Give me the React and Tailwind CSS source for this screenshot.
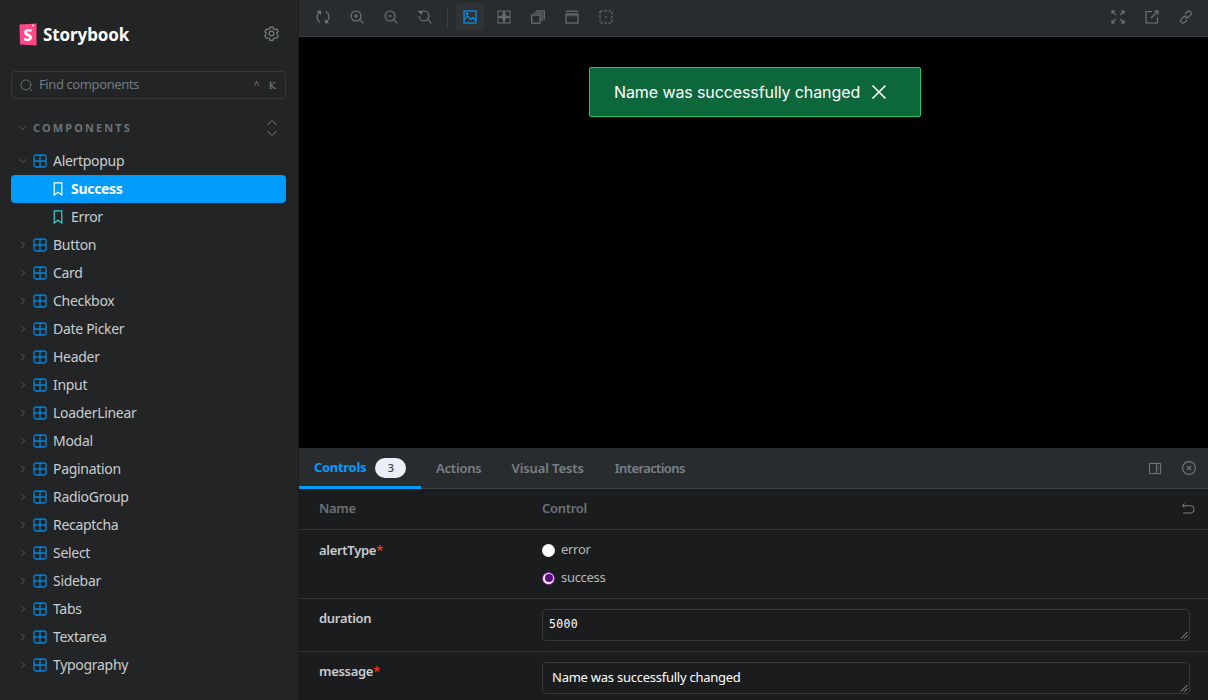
import { ChevronRight, ChevronDown, Search } from 'lucide-react';

const components = ['Button', 'Card', 'Checkbox', 'Date Picker', 'Header', 'Input', 'LoaderLinear', 'Modal', 'Pagination', 'RadioGroup', 'Recaptcha', 'Select', 'Sidebar', 'Tabs', 'Textarea', 'Typography'];

function Icon({ children, className = 'text-[#6f7a80]', size = 14 }) {
  return (
    <svg width={size} height={size} viewBox="0 0 14 14" fill="none" stroke="currentColor" strokeWidth="1.1" className={className}>
      {children}
    </svg>
  );
}

function ComponentIcon() {
  return (
    <svg width="14" height="14" viewBox="0 0 14 14" fill="none" stroke="#0a84d8" strokeWidth="1.3" className="shrink-0">
      <rect x="1" y="1" width="12" height="12" rx="2" />
      <path d="M7 1v12M1 7h12" />
    </svg>
  );
}

function Bookmark({ color }) {
  return (
    <svg width="14" height="14" viewBox="0 0 14 14" fill="none" stroke={color} strokeWidth="1.2" className="shrink-0">
      <path d="M3.2 0.8h7.6v12.2L7 10.2 3.2 13z" />
    </svg>
  );
}

function TreeRow({ label, open }) {
  const Chevron = open ? ChevronDown : ChevronRight;
  return (
    <div className="h-7 flex items-center pl-[17px]">
      <Chevron size={12} strokeWidth={1.5} className="text-[#6c7479] shrink-0" />
      <div className="ml-[4px]"><ComponentIcon /></div>
      <span className="ml-[6px] pb-[1px] text-[14px] tracking-[-0.3px] text-[#c9cdcf]">{label}</span>
    </div>
  );
}

function Sidebar() {
  return (
    <aside className="w-[299px] shrink-0 h-[700px] overflow-hidden bg-[#222425] border-r border-[#1b1c1d]">
      <div className="h-[71px] pl-[19px] pr-[19px] pt-[22px] flex items-start justify-between">
        <div className="flex items-center gap-[6px]">
          <svg width="18" height="23" viewBox="0 0 18 23">
            <path d="M0.5 1.5L17.5 0.5V22.5L1 21.6z" fill="#ff4785" />
            <circle cx="14" cy="2.6" r="1" fill="#fff" />
            <text x="9" y="17.5" textAnchor="middle" fontSize="16" fontWeight="800" fill="#fff" fontFamily="'Noto Sans', sans-serif">S</text>
          </svg>
          <span className="text-[17px] leading-6 pt-[1px] font-bold text-white tracking-[-0.1px]">Storybook</span>
        </div>
        <div className="pt-[4px]">
          <Icon className="text-[#798186]" size={15}>
            <circle cx="7" cy="7" r="2.2" />
            <path d="M5.6 1h2.8l.4 1.6 1.5.8 1.6-.5 1.4 2.3-1.2 1.2v1.6l1.2 1.2-1.4 2.3-1.6-.5-1.5.8-.4 1.6H5.6l-.4-1.6-1.5-.8-1.6.5L.7 9.2l1.2-1.2V6.4L.7 5.2l1.4-2.3 1.6.5 1.5-.8z" />
          </Icon>
        </div>
      </div>
      <div className="ml-[11px] mr-[12px] h-7 rounded-[4px] border border-[#36393b] flex items-center pl-[7px] pr-[9px]">
        <Search size={15} strokeWidth={1.3} className="text-[#7b8388]" />
        <span className="ml-[5px] text-[13px] tracking-[-0.4px] text-[#737b80]">Find components</span>
        <span className="ml-auto text-[10px] text-[#798186]">^</span>
        <span className="ml-[9px] text-[10px] text-[#798186] font-['DejaVu_Serif',serif]">K</span>
      </div>
      <div className="h-[30px] mt-[14px] flex items-center pl-[17px] pr-[20px]">
        <ChevronDown size={12} strokeWidth={1.5} className="text-[#6c7479]" />
        <span className="ml-[4px] text-[11px] font-bold tracking-[2.1px] text-[#6b7276]">COMPONENTS</span>
        <svg width="14" height="20" viewBox="0 0 14 20" fill="none" stroke="#798186" strokeWidth="1" className="ml-auto translate-x-[1px]">
          <path d="M2.5 7L7 2.5 11.5 7M2.5 13L7 17.5 11.5 13" />
        </svg>
      </div>
      <div className="mt-[4px]">
        <TreeRow label="Alertpopup" open />
        <div className="ml-[11px] mr-[12px] h-7 rounded-[4px] bg-[#029cfd] flex items-center pl-[40px]">
          <Bookmark color="#ffffff" />
          <span className="ml-[6px] pb-[1px] text-[14px] tracking-[-0.3px] font-bold text-white">Success</span>
        </div>
        <div className="ml-[11px] mr-[12px] h-7 flex items-center pl-[40px]">
          <Bookmark color="#37d5d3" />
          <span className="ml-[6px] pb-[1px] text-[14px] tracking-[-0.3px] text-[#c9cdcf]">Error</span>
        </div>
        {components.map((name) => (
          <TreeRow key={name} label={name} />
        ))}
      </div>
    </aside>
  );
}

function ToolButton({ children, active }) {
  return (
    <div className={`w-7 h-7 rounded-[4px] flex items-center justify-center ${active ? 'bg-[#2f3336]' : ''}`}>
      {children}
    </div>
  );
}

function Toolbar() {
  return (
    <div className="h-[37px] shrink-0 bg-[#292c2e] border-b border-[#3d4144] flex items-center pb-[2px] pl-[10px] pr-[8px]">
      <div className="flex items-center gap-[6px]">
        <ToolButton>
          <Icon>
            <path d="M4.2 12.4A6 6 0 0 1 3 2.6" />
            <path d="M9.8 1.6A6 6 0 0 1 11 11.4" />
            <path d="M2 1.2h2.4v2.4z" fill="currentColor" />
            <path d="M12 12.8H9.6v-2.4z" fill="currentColor" />
          </Icon>
        </ToolButton>
        <ToolButton>
          <Icon>
            <circle cx="6" cy="6" r="5" />
            <path d="M9.7 9.7L13.3 13.3M3.8 6h4.4M6 3.8v4.4" />
          </Icon>
        </ToolButton>
        <ToolButton>
          <Icon>
            <circle cx="6" cy="6" r="5" />
            <path d="M9.7 9.7L13.3 13.3M3.8 6h4.4" />
          </Icon>
        </ToolButton>
        <ToolButton>
          <Icon>
            <path d="M1 6a5 5 0 1 0 1.6-3.7" />
            <path d="M1 1.2h2.4v2.4z" fill="currentColor" />
            <path d="M9.7 9.7L13.3 13.3" />
          </Icon>
        </ToolButton>
      </div>
      <div className="w-px h-5 bg-[#3d4144] ml-[8px] mr-[8px]" />
      <div className="flex items-center gap-[6px]">
        <ToolButton active>
          <Icon className="text-[#029cfd]" size={14}>
            <rect x="1" y="1" width="12" height="12" />
            <path d="M1 10l3.5-4 3.5 3.5 2-2 3 3" />
            <circle cx="4" cy="3.8" r="0.8" />
          </Icon>
        </ToolButton>
        <ToolButton>
          <Icon size={14} className="text-[#5f696e]">
            <rect x="1" y="1" width="5.5" height="5.5" />
            <rect x="7.5" y="1" width="5.5" height="5.5" />
            <rect x="1" y="7.5" width="5.5" height="5.5" />
            <rect x="7.5" y="7.5" width="5.5" height="5.5" />
            <rect x="4.5" y="4.5" width="5" height="5" fill="currentColor" stroke="none" />
          </Icon>
        </ToolButton>
        <ToolButton>
          <Icon size={14}>
            <rect x="0.8" y="5" width="8.2" height="8.2" />
            <path d="M2.8 3h8.2v8.2M4.8 1h8.4v8.4" />
          </Icon>
        </ToolButton>
        <ToolButton>
          <Icon size={14}>
            <path d="M1 1.2h12" />
            <rect x="1" y="4" width="12" height="9" />
            <path d="M3 4v2.5M5 4v1.5M7 4v2.5M9 4v1.5M11 4v2.5" />
          </Icon>
        </ToolButton>
        <ToolButton>
          <Icon size={14}>
            <rect x="1" y="1" width="12" height="12" rx="0.5" strokeDasharray="2.4 1.6" />
            <path d="M6.4 7h1.2" strokeWidth="1.4" />
          </Icon>
        </ToolButton>
      </div>
      <div className="ml-auto flex items-center gap-[6px]">
        <ToolButton>
          <Icon size={14}>
            <path d="M1 1l3.8 3.8M13 1L9.2 4.8M1 13l3.8-3.8M13 13L9.2 9.2" />
            <path d="M1 4V1h3M10 1h3v3M1 10v3h3M13 10v3h-3" />
          </Icon>
        </ToolButton>
        <ToolButton>
          <Icon size={14}>
            <path d="M7 1.5H1v11.5h11.5V7" />
            <path d="M6 8L13 1M9 1h4v4" />
          </Icon>
        </ToolButton>
        <ToolButton>
          <Icon size={14}>
            <path d="M6 4l2.4-2.4a2.3 2.3 0 0 1 3.9 1.7c0 .6-.2 1.2-.7 1.6L9.2 7.3a2.3 2.3 0 0 1-3.3 0" />
            <path d="M8 10l-2.4 2.4a2.3 2.3 0 0 1-3.9-1.7c0-.6.2-1.2.7-1.6l2.4-2.4a2.3 2.3 0 0 1 3.3 0" />
          </Icon>
        </ToolButton>
      </div>
    </div>
  );
}

function Canvas() {
  return (
    <div className="h-[411px] shrink-0 bg-black flex justify-center pt-[30px] pl-[3px]">
      <div className="h-[50px] w-[332px] bg-[#0c673b] border border-[#22c266] rounded-[2px] flex items-center pl-[24px] font-['Inter',sans-serif]">
        <span className="text-[16px] tracking-[-0.1px] text-white whitespace-nowrap">Name was successfully changed</span>
        <svg width="16" height="16" viewBox="0 0 16 16" stroke="#ffffff" strokeWidth="1.7" className="ml-[11px]">
          <path d="M1.5 1.5l13 13M14.5 1.5l-13 13" />
        </svg>
      </div>
    </div>
  );
}

function Tabs() {
  return (
    <div className="h-[41px] shrink-0 bg-[#292c2e] border-b border-[#3d4144] flex items-stretch">
      <div className="w-[122px] h-[41px] border-b-[3px] border-[#029cfd] flex items-center pl-[15px] pt-[2px] text-[13px] font-bold tracking-[-0.3px] text-[#029cfd]">
        Controls
        <span className="ml-[9px] w-[31px] h-5 rounded-full bg-[#e8eff6] text-[#3d4144] text-[11px] font-medium flex items-center justify-center">3</span>
      </div>
      <div className="ml-[15px] pt-[1px] flex items-center text-[13px] font-semibold text-[#798186]">
        <span className="tracking-[-0.2px]">Actions</span>
        <span className="ml-[30px] tracking-[-0.1px]">Visual Tests</span>
        <span className="ml-[31px] tracking-[-0.6px]">Interactions</span>
      </div>
      <div className="ml-auto flex items-center gap-[20px] pr-[12px]">
        <Icon size={13}>
          <rect x="0.5" y="1.5" width="12" height="11" />
          <path d="M8 1.5v11" />
          <path d="M10 4v6" strokeDasharray="1 1" />
        </Icon>
        <Icon>
          <circle cx="7" cy="7" r="6.4" />
          <path d="M4.8 4.8l4.4 4.4M9.2 4.8l-4.4 4.4" />
        </Icon>
      </div>
    </div>
  );
}

function ArgRow({ name, required, className, nameClass, children }) {
  return (
    <div className={`flex border-b border-[#333638] pl-[20px] ${className}`}>
      <div className={`w-[223px] shrink-0 text-[13px] leading-5 font-semibold tracking-[-0.3px] text-[#c9cdcf] ${nameClass}`}>
        {name}
        {required && <span className="text-[#e5371b]">*</span>}
      </div>
      <div className="flex-1 pr-[18px]">{children}</div>
    </div>
  );
}

function Radio({ label, checked }) {
  return (
    <div className="h-7 flex items-center gap-[6px] text-[13px] tracking-[-0.3px] text-[#b4b8ba]">
      {checked ? (
        <span className="w-[13px] h-[13px] rounded-full bg-[#7d2a9e] flex items-center justify-center">
          <span className="w-[11px] h-[11px] rounded-full bg-[#f2e8f6] flex items-center justify-center">
            <span className="w-[8px] h-[8px] rounded-full bg-[#5e0a7e]" />
          </span>
        </span>
      ) : (
        <span className="w-[13px] h-[13px] rounded-full bg-white" />
      )}
      {label}
    </div>
  );
}

function FakeTextarea({ children, mono }) {
  return (
    <div className={`relative h-8 rounded-[4px] border border-[#36393b] flex items-center ${mono ? "pl-[6px] text-[11.5px] tracking-[0.3px] font-['DejaVu_Sans_Mono',monospace]" : 'pl-[9px] text-[13px] tracking-[-0.25px]'} text-white`}>
      {children}
      <svg width="8" height="8" viewBox="0 0 8 8" stroke="#a0a4a6" strokeWidth="1" className="absolute right-[1px] bottom-[1px]">
        <path d="M1 7.5L7.5 1M4.5 7.5L7.5 4.5" />
      </svg>
    </div>
  );
}

function Panel() {
  return (
    <div className="flex-1 min-h-0 flex flex-col overflow-hidden bg-[#1b1c1d]">
      <Tabs />
      <div className="h-[41px] shrink-0 flex items-center border-b border-[#333638] pl-[20px] pr-[13px] text-[13px] font-semibold tracking-[-0.3px] text-[#6b7276]">
        <span className="w-[223px]">Name</span>
        <span>Control</span>
        <svg width="14" height="14" viewBox="0 0 14 14" fill="none" stroke="#798186" strokeWidth="1" className="ml-auto">
          <path d="M3.5 1.5L1.5 3.7l2 2M1.5 3.7h8a3 3 0 0 1 0 7.3H2" />
        </svg>
      </div>
      <ArgRow name="alertType" required className="h-[69px] shrink-0" nameClass="pt-[10px]">
        <div className="pt-[6px]">
          <Radio label="error" />
          <Radio label="success" checked />
        </div>
      </ArgRow>
      <ArgRow name="duration" className="h-[53px] shrink-0" nameClass="pt-[9px]">
        <div className="pt-[10px]">
          <FakeTextarea mono>5000</FakeTextarea>
        </div>
      </ArgRow>
      <ArgRow name="message" required className="h-[53px] shrink-0" nameClass="pt-[9px]">
        <div className="pt-[10px]">
          <FakeTextarea>Name was successfully changed</FakeTextarea>
        </div>
      </ArgRow>
    </div>
  );
}

export default function App() {
  return (
    <div className="flex w-[1208px] h-[700px] overflow-hidden font-['Noto_Sans',sans-serif]">
      <Sidebar />
      <main className="flex-1 min-w-0 flex flex-col">
        <Toolbar />
        <Canvas />
        <Panel />
      </main>
    </div>
  );
}
